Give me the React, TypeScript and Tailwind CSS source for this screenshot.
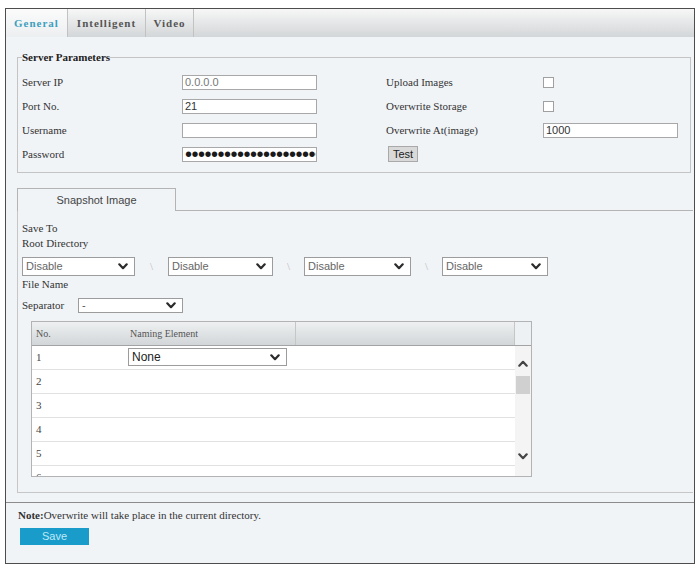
import React from "react";

const Chevron = ({ className = "" }: { className?: string }) => (
  <svg viewBox="0 0 10 7" className={className} fill="none" stroke="currentColor" strokeWidth="2.2" strokeLinecap="round" strokeLinejoin="round">
    <path d="M1.3 1.3 5 5.2 8.7 1.3" />
  </svg>
);

function Select({ value, className }: { value: string; className: string }) {
  return (
    <div className={`flex items-center justify-between border border-[#9c9c9c] bg-white pl-[3px] pr-[6px] font-['Liberation_Sans',sans-serif] ${className}`}>
      <span>{value}</span>
      <Chevron className="h-[7px] w-[10px] text-[#2b2b2b]" />
    </div>
  );
}

function TextBox({ children, className = "" }: { children?: React.ReactNode; className?: string }) {
  return (
    <div className={`h-[15px] w-[135px] overflow-hidden whitespace-nowrap border border-[#a8a8a8] bg-white px-[2px] font-['Liberation_Sans',sans-serif] text-[11px] leading-[13px] ${className}`}>
      {children}
    </div>
  );
}

const CheckBox = () => <div className="h-[11px] w-[11px] border border-[#a0a0a0] bg-white" />;

export default function App() {
  return (
    <div className="h-[565px] w-[698px] bg-white pl-[5px] pt-[8px] font-['Liberation_Serif',serif] text-[11px] text-[#333]">
      <div className="flex h-[556px] w-[690px] flex-col border border-[#4d4d4d] bg-[#f1f4f7]">
        {/* top tabs */}
        <div className="flex h-[28px] bg-gradient-to-b from-[#f7f7f7] to-[#d3d6d8] font-bold tracking-[1px]">
          <div className="flex w-[62px] items-center justify-center border-r border-[#c2c2c2] bg-gradient-to-b from-[#fbfbfb] to-[#eceff1] text-[#3f9fbd]">General</div>
          <div className="flex w-[78px] items-center justify-center border-r border-[#c2c2c2] text-[#555]">Intelligent</div>
          <div className="flex w-[48px] items-center justify-center border-r border-[#c2c2c2] text-[#555]">Video</div>
        </div>

        {/* server parameters */}
        <fieldset className="ml-[11px] mr-[3px] mt-[14px] border border-[#c4c4c4] pb-[6px] pl-[4px] pt-[6px]">
          <legend className="font-bold leading-[13px] text-[#222]">Server Parameters</legend>
          <div className="flex h-[24px] items-center">
            <div className="flex w-[364px] items-center">
              <span className="w-[160px]">Server IP</span>
              <TextBox className="text-[#777]">0.0.0.0</TextBox>
            </div>
            <span className="w-[157px]">Upload Images</span>
            <CheckBox />
          </div>
          <div className="flex h-[24px] items-center">
            <div className="flex w-[364px] items-center">
              <span className="w-[160px]">Port No.</span>
              <TextBox className="text-[#333]">21</TextBox>
            </div>
            <span className="w-[157px]">Overwrite Storage</span>
            <CheckBox />
          </div>
          <div className="flex h-[24px] items-center">
            <div className="flex w-[364px] items-center">
              <span className="w-[160px]">Username</span>
              <TextBox />
            </div>
            <span className="w-[157px]">Overwrite At(image)</span>
            <TextBox className="text-[#333]">1000</TextBox>
          </div>
          <div className="flex h-[24px] items-center">
            <div className="flex w-[364px] items-center">
              <span className="w-[160px]">Password</span>
              <TextBox className="text-[20px] tracking-[-0.5px] text-[#1a1a1a]">{"•".repeat(24)}</TextBox>
            </div>
            <button className="ml-[2px] flex h-[16px] w-[30px] items-center justify-center border border-[#a9a9a9] bg-[#d9d9d9] font-['Liberation_Sans',sans-serif] text-[11px] text-[#222]">Test</button>
          </div>
        </fieldset>

        {/* snapshot image */}
        <div className="ml-[11px] mr-[1px] mt-[15px] flex flex-col">
          <div className="flex h-[23px]">
            <div className="flex w-[159px] items-center justify-center border border-b-0 border-[#b4b4b4] font-['Liberation_Sans',sans-serif] text-[11px] text-[#444]">Snapshot Image</div>
            <div className="flex-1 border-b border-[#b4b4b4]" />
          </div>
          <div className="border-b border-l border-[#c6c6c6] pb-[15px] pl-[4px] pt-[10px]">
            <div className="leading-[15px]">Save To</div>
            <div className="leading-[15px]">Root Directory</div>
            <div className="mt-[6px] flex items-center text-[11px] text-[#666]">
              <Select value="Disable" className="h-[19px] w-[113px]" />
              <span className="w-[33px] text-center text-[#bbb]">\</span>
              <Select value="Disable" className="h-[19px] w-[105px]" />
              <span className="w-[31px] text-center text-[#bbb]">\</span>
              <Select value="Disable" className="h-[19px] w-[107px]" />
              <span className="w-[31px] text-center text-[#bbb]">\</span>
              <Select value="Disable" className="h-[19px] w-[106px]" />
            </div>
            <div className="mt-[1px] leading-[15px]">File Name</div>
            <div className="mt-[5px] flex items-center">
              <span className="w-[56px]">Separator</span>
              <Select value="-" className="h-[15px] w-[105px] text-[11px] text-[#555]" />
            </div>

            {/* naming table */}
            <div className="ml-[9px] mt-[7px] w-[501px] border border-[#b3b3b3] bg-white">
              <div className="flex h-[24px] border-b border-[#a3a3a3] bg-gradient-to-b from-[#eef0f1] to-[#d2d6d8] text-[10px] text-[#555]">
                <div className="flex w-[94px] items-center pl-[4px]">No.</div>
                <div className="flex w-[170px] items-center border-r border-[#c6c6c6] pl-[4px]">Naming Element</div>
                <div className="flex-1 border-r border-[#c6c6c6]" />
                <div className="w-[16px] bg-[#eef1f3]" />
              </div>
              <div className="flex h-[130px]">
                <div className="flex-1 overflow-hidden">
                  {[1, 2, 3, 4, 5, 6].map((n) => (
                    <div key={n} className="flex h-[24px] items-center border-b border-[#e1e1e1]">
                      <span className="w-[96px] pl-[4px] text-[#444]">{n}</span>
                      {n === 1 && <Select value="None" className="h-[18px] w-[159px] text-[12px] text-[#222]" />}
                    </div>
                  ))}
                </div>
                <div className="flex w-[16px] flex-col items-center bg-[#f4f4f4] pb-[16px] pt-[14px]">
                  <Chevron className="h-[7px] w-[10px] rotate-180 text-[#444]" />
                  <div className="mt-[9px] h-[18px] w-[14px] bg-[#d0d0d0]" />
                  <div className="flex-1" />
                  <Chevron className="h-[7px] w-[10px] text-[#444]" />
                </div>
              </div>
            </div>
          </div>
        </div>

        {/* note + save */}
        <div className="mt-[9px] border-t border-[#8c8c8c] pl-[12px] pt-[5px]">
          <div className="leading-[14px] text-[#333]">
            <span className="font-bold">Note:</span>Overwrite will take place in the current directory.
          </div>
          <button className="ml-[2px] mt-[6px] h-[17px] w-[69px] bg-[#1a9ccb] font-['Liberation_Sans',sans-serif] text-[11px] text-[#bfe9f7]">Save</button>
        </div>
      </div>
    </div>
  );
}
